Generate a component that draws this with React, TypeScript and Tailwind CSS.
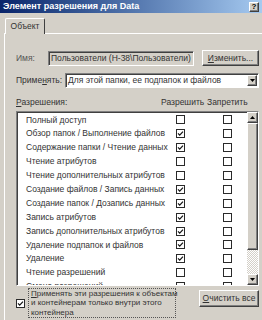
const ROWS: [string, boolean][] = [
  ['Полный доступ', false],
  ['Обзор папок / Выполнение файлов', true],
  ['Содержание папки / Чтение данных', true],
  ['Чтение атрибутов', false],
  ['Чтение дополнительных атрибутов', false],
  ['Создание файлов / Запись данных', true],
  ['Создание папок / Дозапись данных', true],
  ['Запись атрибутов', true],
  ['Запись дополнительных атрибутов', true],
  ['Удаление подпапок и файлов', true],
  ['Удаление', true],
  ['Чтение разрешений', false],
  ['Смена разрешений', false],
]

const raised =
  'border border-t-white border-l-white border-r-[#404040] border-b-[#404040] shadow-[inset_-1px_-1px_0_#808080] bg-[#d4d0c8]'
const sunken =
  'border border-t-[#808080] border-l-[#808080] border-r-white border-b-white shadow-[inset_1px_1px_0_#404040]'

function Check({ on }: { on: boolean }) {
  return (
    <div className="w-[9px] h-[9px] shrink-0 bg-white border border-[#2a2a2a] flex items-center justify-center">
      {on && (
        <svg width="7" height="7" viewBox="0 0 7 7">
          <path d="M1 3.4 L2.7 5.1 L6 1.6" fill="none" stroke="#111" strokeWidth="1.2" />
        </svg>
      )}
    </div>
  )
}

function Arrow({ up }: { up?: boolean }) {
  return (
    <svg width="5" height="3" viewBox="0 0 5 3">
      <path d={up ? 'M0 3 L2.5 0 L5 3 Z' : 'M0 0 L5 0 L2.5 3 Z'} fill="#000" />
    </svg>
  )
}

export default function App() {
  return (
    <div className="w-[262px] h-[320px] bg-[#d4d0c8] overflow-hidden flex flex-col font-['Liberation_Sans',Arial,sans-serif] text-[8.5px] text-[#333]">
      {/* title bar */}
      <div className="h-[13px] shrink-0 bg-gradient-to-r from-[#0a246a] to-[#a6caf0] flex items-center pl-[3px] pr-[3px]">
        <span className="text-white font-bold text-[9px] leading-none">Элемент разрешения для Data</span>
        <div className={`ml-auto w-[10px] h-[10px] ${raised} flex items-center justify-center text-[8px] font-bold text-black leading-none`}>
          ?
        </div>
      </div>

      {/* tabs */}
      <div className="flex items-end mt-[5px] ml-[4px]">
        <div className="w-[1px] h-[1px] bg-white" />
        <div className="w-[40px] h-[16px] border-t border-l border-white border-r border-r-[#404040] rounded-t-[2px] flex items-center justify-center">
          Объект
        </div>
        <div className="flex-1 h-[1px] bg-white" />
      </div>

      {/* panel */}
      <div className="flex-1 ml-[4px] border-l border-white pl-[11px] pr-[3px] flex flex-col">
        <div className="flex items-center h-[16px] mt-[16px]">
          <span className="w-[32px] text-[#555]">Имя:</span>
          <div className={`w-[146px] h-[15px] ${sunken} flex items-center pl-[2px] whitespace-nowrap overflow-hidden`}>
            Пользователи (H-38\Пользователи)
          </div>
          <div className={`ml-[8px] w-[57px] h-[16px] ${raised} flex items-center justify-center`}>
            <span><span className="underline">И</span>зменить...</span>
          </div>
        </div>

        <div className="flex items-center h-[15px] mt-[7px]">
          <span className="w-[49px]">
            Приме<span className="underline">н</span>ять:
          </span>
          <div className={`flex-1 h-[15px] bg-white ${sunken} flex items-center pl-[2px] pr-[1px]`}>
            <span className="flex-1 whitespace-nowrap">Для этой папки, ее подпапок и файлов</span>
            <div className={`w-[10px] h-[11px] ${raised} flex items-center justify-center`}>
              <Arrow />
            </div>
          </div>
        </div>

        <div className="flex items-center h-[10px] mt-[9px]">
          <span className="flex-1">
            <span className="underline">Р</span>азрешения:
          </span>
          <span className="w-[46px]">Разрешить</span>
          <span className="w-[40px]">Запретить</span>
          <span className="w-[12px]" />
        </div>

        <div className={`mt-[4px] h-[175px] bg-white ${sunken} flex overflow-hidden`}>
          <div className="flex-1 pt-[1px] overflow-hidden">
            {ROWS.map(([label, allow]) => (
              <div key={label} className="h-[13.9px] flex items-center">
                <span className="w-[159px] pl-[9px] whitespace-nowrap overflow-hidden">{label}</span>
                <Check on={allow} />
                <div className="w-[38px] shrink-0" />
                <Check on={false} />
              </div>
            ))}
          </div>
          <div className="w-[11px] shrink-0 flex flex-col">
            <div className={`h-[11px] ${raised} flex items-center justify-center`}>
              <Arrow up />
            </div>
            <div className={`h-[127px] ${raised}`} />
            <div className="flex-1 bg-[repeating-conic-gradient(#ffffff_0_25%,#d4d0c8_0_50%)] bg-[length:2px_2px]" />
            <div className={`h-[11px] ${raised} flex items-center justify-center`}>
              <Arrow />
            </div>
          </div>
        </div>

        <div className="flex mt-[2px]">
          <div className="w-[12px] flex items-center">
            <Check on />
          </div>
          <div className="w-[148px] h-[30px] border border-dotted border-[#555] pl-[2px] leading-[9.5px] text-[8px] flex flex-col justify-center whitespace-nowrap">
            <span>
              <span className="underline">П</span>рименять эти разрешения к объектам
            </span>
            <span>и контейнерам только внутри этого</span>
            <span>контейнера</span>
          </div>
          <div className={`ml-auto mt-[2px] w-[60px] h-[17px] ${raised} flex items-center justify-center`}>
            <span><span className="underline">О</span>чистить все</span>
          </div>
        </div>
      </div>
    </div>
  )
}
